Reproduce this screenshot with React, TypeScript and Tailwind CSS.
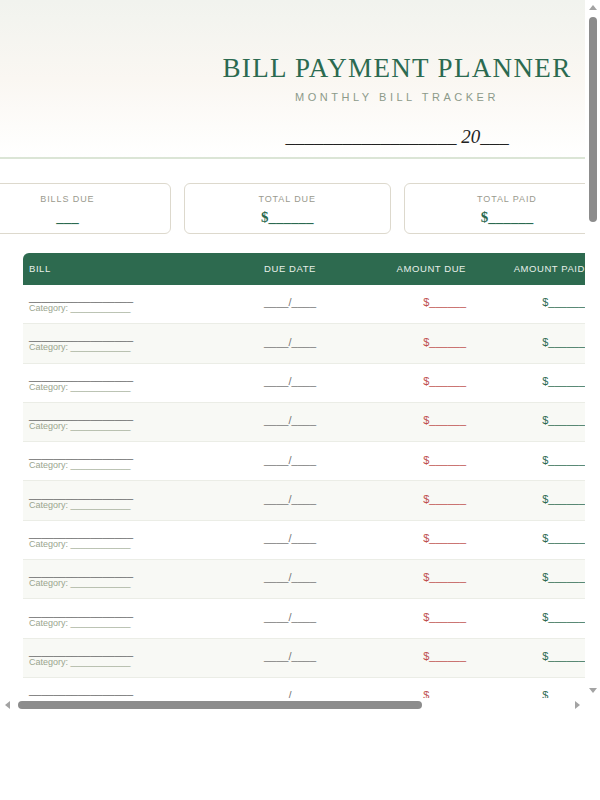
import React from "react";

const rows = Array.from({ length: 14 });

export default function App() {
  return (
    <div className="relative w-[600px] h-[712px] bg-white" style={{ fontFamily: '"Liberation Sans", Arial, sans-serif' }}>
      <div className="w-[585px] h-[698px] overflow-hidden">
        <div className="w-[830px]">
          <div className="bg-gradient-to-b from-[#f1f3ee] via-[#faf7f2] to-white border-b-2 border-[#dbe5d6] h-[159px] flex flex-col">
            <div className="w-[794px] flex flex-col items-center">
              <h1 className="mt-[52px] text-[27px] leading-[32px] tracking-[0.05em] text-[#2b6a50]" style={{ fontFamily: '"Liberation Serif", "Times New Roman", serif' }}>
                BILL PAYMENT PLANNER
              </h1>
              <div className="mt-[5px] text-[11px] tracking-[0.32em] text-[#8c9a8a]">MONTHLY BILL TRACKER</div>
              <div className="mt-[17px] text-[19px] italic text-[#222]" style={{ fontFamily: '"Liberation Serif", "Times New Roman", serif' }}>
                __________________ 20___
              </div>
            </div>
          </div>
          <div className="flex gap-[13px] ml-[-36px] mt-[24px]">
            {[
              ["BILLS DUE", "___"],
              ["TOTAL DUE", "$______"],
              ["TOTAL PAID", "$______"],
              ["REMAINING", "$______"],
            ].map(([l, v]) => (
              <div key={l} className="w-[207px] h-[51px] border border-[#ddd9cd] rounded-[6px] flex flex-col items-center pt-[9px]">
                <div className="text-[9px] tracking-[0.1em] text-[#9a9a8e]">{l}</div>
                <div className="text-[15px] font-bold text-[#2b6a50] leading-[18px] mt-[1px]" style={{ fontFamily: '"Liberation Serif", "Times New Roman", serif' }}>{v}</div>
              </div>
            ))}
          </div>
          <div className="ml-[23px] mt-[19px] w-[790px]">
            <div className="h-[32px] bg-[#2d6a4f] rounded-t-[6px] grid grid-cols-[197px_140px_112px_119px_1fr] items-center text-[9.5px] tracking-[0.06em] text-[#e8f0ea]">
              <div className="pl-[6px]">BILL</div>
              <div className="text-center">DUE DATE</div>
              <div className="text-right pr-[6px]">AMOUNT DUE</div>
              <div className="text-right pr-[6px]">AMOUNT PAID</div>
              <div className="text-center">STATUS</div>
            </div>
            {rows.map((_, i) => (
              <div key={i} className={`h-[39.3px] border-b border-[#ebede6] grid grid-cols-[197px_140px_112px_119px_1fr] items-center ${i % 2 ? "bg-[#f8f9f5]" : "bg-white"}`}>
                <div className="pl-[6px] flex flex-col -mt-[3px]">
                  <span className="text-[11px] leading-[12px] text-[#666]">_________________</span>
                  <span className="text-[9px] leading-[11px] text-[#9aa58f]">Category: ____________</span>
                </div>
                <div className="text-center text-[11px] text-[#777] -mt-[3px]">____/____</div>
                <div className="text-right pr-[6px] text-[11px] text-[#c0504d] -mt-[3px]">$______</div>
                <div className="text-right pr-[6px] text-[11px] text-[#2d6a4f] -mt-[3px]">$______</div>
                <div className="text-center text-[11px] text-[#999]">☐</div>
              </div>
            ))}
          </div>
        </div>
      </div>
      {/* vertical scrollbar */}
      <div className="absolute right-0 top-0 w-[15px] h-[698px] bg-white flex flex-col items-center">
        <div className="mt-[5px] w-0 h-0 border-l-[4px] border-r-[4px] border-b-[5px] border-l-transparent border-r-transparent border-b-[#a3a3a3]" />
        <div className="mt-[7px] w-[8px] h-[205px] rounded-full bg-[#8c8c8c]" />
        <div className="mt-auto mb-[5px] w-0 h-0 border-l-[4px] border-r-[4px] border-t-[5px] border-l-transparent border-r-transparent border-t-[#a3a3a3]" />
      </div>
      {/* horizontal scrollbar */}
      <div className="absolute left-0 bottom-0 w-[585px] h-[14px] bg-white flex items-center">
        <div className="ml-[5px] w-0 h-0 border-t-[4px] border-b-[4px] border-r-[5px] border-t-transparent border-b-transparent border-r-[#a3a3a3]" />
        <div className="ml-[8px] w-[404px] h-[8px] rounded-full bg-[#8c8c8c]" />
        <div className="ml-auto mr-[5px] w-0 h-0 border-t-[4px] border-b-[4px] border-l-[5px] border-t-transparent border-b-transparent border-l-[#a3a3a3]" />
      </div>
    </div>
  );
}
